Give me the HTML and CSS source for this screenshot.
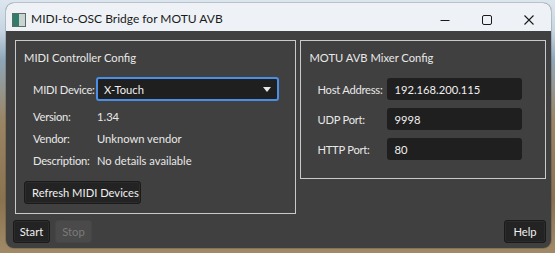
FILE: index.html
```html
<!DOCTYPE html>
<html>
<head>
<meta charset="utf-8">
<link rel="stylesheet" href="styles.css">
</head>
<body>
<div class="desktop">
  <div class="window">
    <div class="titlebar">
      <div class="app-icon">
        <svg width="14" height="14" viewBox="0 0 14 14">
          <rect x="0.5" y="0.5" width="13" height="13" fill="#7a8a86" stroke="#5d6a66"/>
          <rect x="1" y="1" width="6" height="12" fill="#2f7d6a"/>
          <rect x="7" y="1" width="6" height="12" fill="#c9d3d0"/>
        </svg>
      </div>
      <div class="title">MIDI-to-OSC Bridge for MOTU AVB</div>
      <div class="controls">
        <svg class="ctl" width="42" height="28" viewBox="0 0 42 28"><line x1="16.5" y1="17.5" x2="25.5" y2="17.5" stroke="#1a1a1a" stroke-width="1"/></svg>
        <svg class="ctl" width="42" height="28" viewBox="0 0 42 28"><rect x="16.5" y="12.5" width="9" height="9" rx="1.5" fill="none" stroke="#1a1a1a" stroke-width="1"/></svg>
        <svg class="ctl" width="42" height="28" viewBox="0 0 42 28"><path d="M16.5 12.5 L25.5 21.5 M25.5 12.5 L16.5 21.5" stroke="#1a1a1a" stroke-width="1.1"/></svg>
      </div>
    </div>
    <div class="content">
      <div class="groups">
        <div class="group group-midi">
          <div class="group-title">MIDI Controller Config</div>
          <div class="form">
            <div class="row">
              <span class="label">MIDI Device:</span>
              <div class="combo"><span>X-Touch</span><span class="arrow"></span></div>
            </div>
            <div class="row info first"><span class="label">Version:</span><span class="value">1.34</span></div>
            <div class="row info"><span class="label">Vendor:</span><span class="value">Unknown vendor</span></div>
            <div class="row info"><span class="label">Description:</span><span class="value">No details available</span></div>
          </div>
          <button class="btn refresh">Refresh MIDI Devices</button>
        </div>
        <div class="group group-motu">
          <div class="group-title">MOTU AVB Mixer Config</div>
          <div class="form motu-form">
            <div class="row"><span class="label mlabel">Host Address:</span><div class="input">192.168.200.115</div></div>
            <div class="row"><span class="label mlabel">UDP Port:</span><div class="input">9998</div></div>
            <div class="row"><span class="label mlabel">HTTP Port:</span><div class="input">80</div></div>
          </div>
        </div>
      </div>
      <div class="footer">
        <div class="left-btns">
          <button class="btn small">Start</button>
          <button class="btn small disabled">Stop</button>
        </div>
        <button class="btn small help">Help</button>
      </div>
    </div>
  </div>
</div>
</body>
</html>
```
FILE: styles.css
```css
html, body {
  margin: 0;
  padding: 0;
  width: 555px;
  height: 253px;
  overflow: hidden;
}
body {
  font-family: "Lato", "Noto Sans", sans-serif;
  font-size: 11.2px;
  white-space: nowrap;
}
.desktop {
  width: 555px;
  height: 253px;
  box-sizing: border-box;
  padding: 3px 4px 5px 6px;
  background:
    linear-gradient(180deg, #dce6ef 0px, #c8d6e2 30px, #8fa6b8 60px, #9a8565 120px, #8a7250 200px, #a08a68 253px);
}
.window {
  width: 545px;
  height: 245px;
  border-radius: 8px;
  overflow: hidden;
  background: #404040;
  display: flex;
  flex-direction: column;
  box-shadow: 0 0 0 1px rgba(0,0,0,0.15);
}
.titlebar {
  height: 28px;
  background: #eef2f6;
  display: flex;
  align-items: center;
  flex-shrink: 0;
}
.app-icon {
  width: 14px;
  height: 14px;
  margin-left: 6px;
  margin-right: 5px;
  margin-top: 5px;
  display: flex;
}
.title {
  flex: 1;
  color: #1a1a1a;
  font-size: 12px;
  padding-top: 2px;
}
.controls {
  display: flex;
  margin-right: 1px;
}
.ctl { display: block; }
.content {
  flex: 1;
  display: flex;
  flex-direction: column;
  padding: 9px 5px 5px 7px;
}
.groups {
  display: flex;
  gap: 4px;
  align-items: flex-start;
  padding-left: 2px;
}
.group {
  border: 1px solid #c9c9c9;
  box-sizing: border-box;
  color: #e8e8e8;
  padding: 9px 8px 8px 8px;
}
.group-midi {
  width: 282px;
  height: 174px;
}
.group-motu {
  width: 246px;
  height: 139px;
}
.group-title {
  line-height: 16px;
  height: 16px;
}
.form {
  margin-top: 11px;
  margin-left: 9px;
}
.row {
  display: flex;
  align-items: center;
  height: 24px;
}
.row.info { height: 22px; }
.row.first { margin-top: 4px; }
.label {
  width: 63px;
  flex-shrink: 0;
  letter-spacing: -0.25px;
}
.value { margin-left: 1px; }
.combo {
  width: 183px;
  height: 24px;
  box-sizing: border-box;
  border: 2px solid #4a8ee6;
  border-radius: 3px;
  background: #1f1f1f;
  display: flex;
  align-items: center;
  justify-content: space-between;
  padding: 0 6px 0 6px;
  color: #f0f0f0;
}
.arrow {
  width: 0;
  height: 0;
  border-left: 4.5px solid transparent;
  border-right: 4.5px solid transparent;
  border-top: 5px solid #e8e8e8;
}
.motu-form {
  margin-top: 8px;
  margin-left: 8px;
}
.motu-form .row { height: 30px; }
.mlabel { width: 70px; }
.input {
  width: 135px;
  height: 22px;
  box-sizing: border-box;
  background: #1f1f1f;
  border-radius: 3px;
  display: flex;
  align-items: center;
  padding-left: 7px;
  color: #f0f0f0;
}
.btn {
  font-family: "Lato", "Noto Sans", sans-serif;
  font-size: 11.2px;
  color: #f0f0f0;
  background: #232323;
  border: 1px solid #1a1a1a;
  border-radius: 3px;
  height: 23px;
  padding: 0 7px;
  box-shadow: inset 0 0 0 1px #2c2c2c;
  white-space: nowrap;
}
.refresh {
  margin-top: 10px;
  width: 117px;
}
.footer {
  margin-top: auto;
  display: flex;
  justify-content: space-between;
  align-items: flex-end;
}
.left-btns {
  display: flex;
  gap: 5px;
}
.small {
  width: 37px;
  padding: 0;
}
.disabled {
  background: #4a4a4a;
  border-color: #454545;
  box-shadow: none;
  color: #7a7a7a;
}
.help {
  width: 42px;
}
```
